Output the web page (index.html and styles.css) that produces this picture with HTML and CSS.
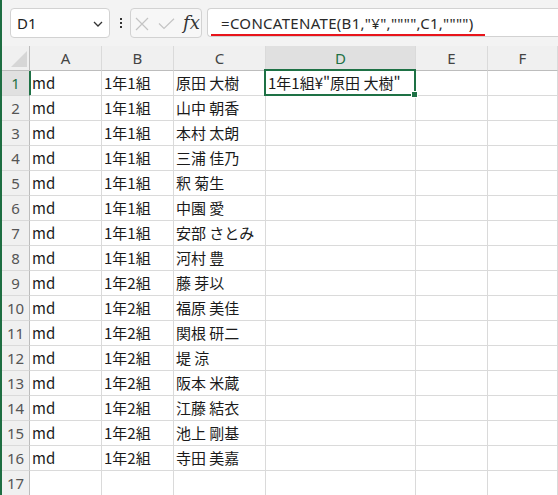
FILE: index.html
```html
<!DOCTYPE html>
<html lang="ja">
<head>
<meta charset="utf-8">
<title>Sheet</title>
<link rel="stylesheet" href="styles.css">
</head>
<body>
<div class="app">
  <div class="toolbar">
    <div class="namebox">
      <span class="nb-text">D1</span>
      <svg class="chev" width="10" height="6" viewBox="0 0 10 6"><path d="M1 1 L5 5 L9 1" fill="none" stroke="#333" stroke-width="1.3"/></svg>
    </div>
    <div class="dots"><i></i><i></i><i></i></div>
    <div class="fxbox">
      <svg class="ic-x" width="14" height="14" viewBox="0 0 14 14"><path d="M1 1 L13 13 M13 1 L1 13" stroke="#c4c4c4" stroke-width="1.2" fill="none"/></svg>
      <svg class="ic-check" width="17" height="12" viewBox="0 0 17 12"><path d="M1 5.5 L6 10.5 L16 0.8" stroke="#c4c4c4" stroke-width="1.2" fill="none"/></svg>
      <span class="fx">fx</span>
    </div>
    <div class="formula">
      <span class="ftext">=CONCATENATE(B1,"¥","""",C1,"""")</span>
      <div class="redline"></div>
    </div>
  </div>
  <div class="sheet">
    <div class="hc corner"><div class="tri"></div></div>
    <div class="hc">A</div><div class="hc">B</div><div class="hc">C</div><div class="hc sel">D</div><div class="hc">E</div><div class="hc">F</div>

    <div class="rh sel">1</div><div class="c">md</div><div class="c">1年1組</div><div class="c">原田 大樹</div><div class="c active">1年1組¥"原田 大樹"<div class="selbox"><div class="handle"></div></div></div><div class="c"></div><div class="c"></div>
    <div class="rh">2</div><div class="c">md</div><div class="c">1年1組</div><div class="c">山中 朝香</div><div class="c"></div><div class="c"></div><div class="c"></div>
    <div class="rh">3</div><div class="c">md</div><div class="c">1年1組</div><div class="c">本村 太朗</div><div class="c"></div><div class="c"></div><div class="c"></div>
    <div class="rh">4</div><div class="c">md</div><div class="c">1年1組</div><div class="c">三浦 佳乃</div><div class="c"></div><div class="c"></div><div class="c"></div>
    <div class="rh">5</div><div class="c">md</div><div class="c">1年1組</div><div class="c">釈 菊生</div><div class="c"></div><div class="c"></div><div class="c"></div>
    <div class="rh">6</div><div class="c">md</div><div class="c">1年1組</div><div class="c">中園 愛</div><div class="c"></div><div class="c"></div><div class="c"></div>
    <div class="rh">7</div><div class="c">md</div><div class="c">1年1組</div><div class="c">安部 さとみ</div><div class="c"></div><div class="c"></div><div class="c"></div>
    <div class="rh">8</div><div class="c">md</div><div class="c">1年1組</div><div class="c">河村 豊</div><div class="c"></div><div class="c"></div><div class="c"></div>
    <div class="rh">9</div><div class="c">md</div><div class="c">1年2組</div><div class="c">藤 芽以</div><div class="c"></div><div class="c"></div><div class="c"></div>
    <div class="rh">10</div><div class="c">md</div><div class="c">1年2組</div><div class="c">福原 美佳</div><div class="c"></div><div class="c"></div><div class="c"></div>
    <div class="rh">11</div><div class="c">md</div><div class="c">1年2組</div><div class="c">関根 研二</div><div class="c"></div><div class="c"></div><div class="c"></div>
    <div class="rh">12</div><div class="c">md</div><div class="c">1年2組</div><div class="c">堤 涼</div><div class="c"></div><div class="c"></div><div class="c"></div>
    <div class="rh">13</div><div class="c">md</div><div class="c">1年2組</div><div class="c">阪本 米蔵</div><div class="c"></div><div class="c"></div><div class="c"></div>
    <div class="rh">14</div><div class="c">md</div><div class="c">1年2組</div><div class="c">江藤 結衣</div><div class="c"></div><div class="c"></div><div class="c"></div>
    <div class="rh">15</div><div class="c">md</div><div class="c">1年2組</div><div class="c">池上 剛基</div><div class="c"></div><div class="c"></div><div class="c"></div>
    <div class="rh">16</div><div class="c">md</div><div class="c">1年2組</div><div class="c">寺田 美嘉</div><div class="c"></div><div class="c"></div><div class="c"></div>
    <div class="rh">17</div><div class="c"></div><div class="c"></div><div class="c"></div><div class="c"></div><div class="c"></div><div class="c"></div>
  </div>
</div>
</body>
</html>
```

FILE: styles.css
```css
html, body {
  margin: 0;
  padding: 0;
  background: #ffffff;
}
body {
  width: 558px;
  height: 495px;
  overflow: hidden;
  font-family: "Noto Sans", "Noto Sans CJK JP", sans-serif;
}
.app {
  border-left: 2px solid #1e6e42;
  height: 495px;
  box-sizing: border-box;
  overflow: hidden;
}
.toolbar {
  height: 46px;
  background: #f3f3f3;
  display: flex;
  align-items: flex-start;
  padding-top: 8px;
  box-sizing: border-box;
}
.namebox {
  margin-left: 8px;
  width: 100px;
  height: 30px;
  box-sizing: border-box;
  border: 1px solid #d2d2d2;
  border-radius: 4px;
  background: #fff;
  display: flex;
  align-items: center;
  justify-content: space-between;
  padding: 0 6px 0 6px;
}
.nb-text {
  font-size: 15px;
  color: #222;
  line-height: 20px;
}
.chev { display: block; margin-top: 1px; }
.dots {
  margin-left: 9px;
  width: 4px;
  height: 30px;
  display: flex;
  flex-direction: column;
  align-items: center;
  justify-content: center;
  gap: 2px;
}
.dots i {
  display: block;
  width: 2px;
  height: 2px;
  background: #333;
}
.fxbox {
  margin-left: 7px;
  width: 72px;
  height: 30px;
  box-sizing: border-box;
  border: 1px solid #d2d2d2;
  border-radius: 4px;
  background: #f7f7f7;
  display: flex;
  align-items: center;
  padding-left: 4px;
}
.ic-x { display: block; margin-top: 2px; }
.ic-check { display: block; margin-left: 9px; margin-top: 2px; }
.fx {
  margin-left: 8px;
  font-family: "DejaVu Serif", "Liberation Serif", serif;
  font-style: italic;
  font-size: 18px;
  color: #333;
  line-height: 20px;
}
.formula {
  margin-left: 5px;
  flex: 1;
  height: 29px;
  box-sizing: border-box;
  border: 1px solid #d2d2d2;
  border-right: none;
  border-radius: 4px 0 0 4px;
  background: #fff;
  display: flex;
  flex-direction: column;
  padding-top: 4px;
}
.ftext {
  margin-left: 13px;
  font-size: 15px;
  line-height: 20px;
  letter-spacing: 0.3px;
  color: #2a2a2a;
  white-space: nowrap;
}
.redline {
  margin-left: 3px;
  margin-top: 1px;
  width: 274px;
  height: 2px;
  background: #e8141b;
}
.sheet {
  display: grid;
  grid-template-columns: 28px 72px 72px 92px 150px 72px 1fr;
  grid-auto-rows: 25px;
  font-family: "Noto Sans CJK JP", sans-serif;
  font-size: 15px;
}
.sheet > div {
  box-sizing: border-box;
  border-right: 1px solid #dadada;
  border-bottom: 1px solid #dadada;
  line-height: 24px;
  white-space: nowrap;
}
.hc {
  background: #f0f0f0;
  color: #444;
  text-align: center;
  border-bottom-color: #bdbdbd !important;
  font-family: "Noto Sans", sans-serif;
}
.hc.sel {
  background: #e0e0e0;
  color: #1e7145;
}
.corner {
  display: flex;
  align-items: flex-end;
  justify-content: flex-end;
  padding: 0 2px 3px 0;
  border-right-color: #bdbdbd !important;
}
.tri {
  width: 16px;
  height: 16px;
  background: #d6d6d6;
  clip-path: polygon(100% 0, 100% 100%, 0 100%);
}
.rh {
  background: #f0f0f0;
  color: #555;
  text-align: center;
  border-right-color: #bdbdbd !important;
  font-family: "Noto Sans", sans-serif;
}
.rh.sel {
  background: #e0e0e0;
  color: #1e7145;
  border-right-color: #1e7145 !important;
  box-shadow: 1px 0 0 #1e7145;
}
.c {
  color: #1a1a1a;
  padding-left: 2px;
  overflow: visible;
}
.active {
  position: relative;
}
.selbox {
  position: absolute;
  left: -2px;
  top: -2px;
  right: -1px;
  bottom: -1px;
  border: 2px solid #1e7145;
  box-sizing: border-box;
}
.handle {
  position: absolute;
  right: -4px;
  bottom: -4px;
  width: 5px;
  height: 5px;
  background: #1e7145;
  border: 1px solid #fff;
}
```
